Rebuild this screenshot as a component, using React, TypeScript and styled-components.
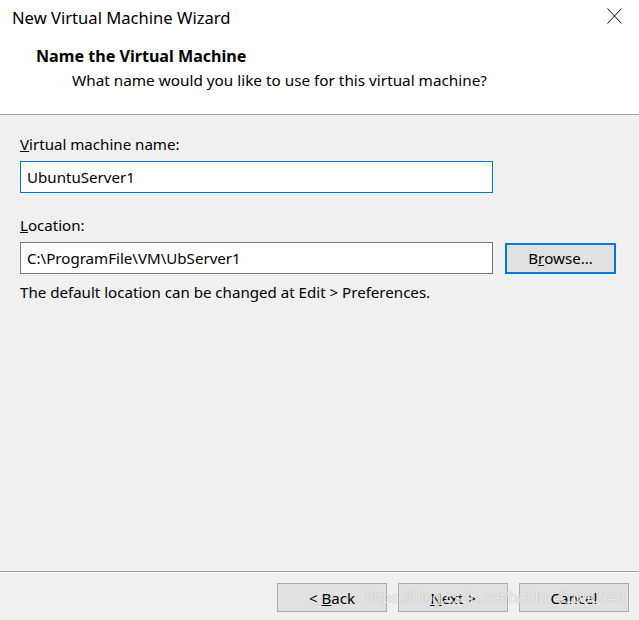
import React from "react";
import styled, {createGlobalStyle} from "styled-components";

const GlobalStyle = createGlobalStyle`
  html, body {
    margin: 0;
    padding: 0;
    background: #f0f0f0;
  }
  body {
    font-family: "Segoe UI", "Noto Sans", "Open Sans", sans-serif;
    color: #000;
  }
`

const Window = styled.div`
  position: relative;
  width: 639px;
  height: 620px;
  display: flex;
  flex-direction: column;
  background: #f0f0f0;
  overflow: hidden;
`

const Header = styled.div`
  height: 114px;
  background: #fff;
  border-bottom: 1px solid #a0a0a0;
  display: flex;
  flex-direction: column;
`

const TitleBar = styled.div`
  height: 34px;
  display: flex;
  align-items: center;
  justify-content: space-between;
  padding: 0 17px 0 12px;
  font-size: 16.6px;
`

const CloseIcon = styled.svg`
  width: 15px;
  height: 16px;
  margin-top: -3px;
`

const Heading = styled.div`
  margin-top: 12px;
  padding-left: 36px;
  font-size: 16.1px;
  font-weight: bold;
  line-height: 20px;
`

const SubHeading = styled.div`
  margin-top: 4px;
  padding-left: 72px;
  font-size: 15.3px;
  line-height: 20px;
`

const Body = styled.div`
  flex: 1;
  padding: 19px 23px 0 20px;
  display: flex;
  flex-direction: column;
  font-size: 15.1px;
`

const Label = styled.div<{ $top?: number }>`
  line-height: 20px;
  margin-top: ${p => p.$top ?? 0}px;
`

const Row = styled.div`
  display: flex;
  align-items: center;
  gap: 12px;
  margin-top: 7px;
`

const TextBox = styled.div<{ $focused?: boolean }>`
  width: 473px;
  height: 32px;
  box-sizing: border-box;
  background: #fff;
  border: 1px solid ${p => (p.$focused ? "#0078d7" : "#7a7a7a")};
  padding: 0 6px;
  display: flex;
  align-items: center;
  margin-top: ${p => (p.$focused ? 7 : 0)}px;
`

const Help = styled.div`
  margin-top: 8px;
  line-height: 20px;
`

const Footer = styled.div`
  box-sizing: border-box;
  height: 49px;
  border-top: 1px solid #a0a0a0;
  box-shadow: inset 0 1px 0 #fff;
  display: flex;
  justify-content: flex-end;
  align-items: flex-start;
  gap: 11px;
  padding: 11px 10px 0 0;
  font-size: 15.1px;
`

const Button = styled.div<{ $default?: boolean }>`
  width: ${p => (p.$default ? 111 : 110)}px;
  height: ${p => (p.$default ? 31 : 29)}px;
  box-sizing: border-box;
  background: #e1e1e1;
  border: ${p => (p.$default ? "2px solid #0078d7" : "1px solid #adadad")};
  display: flex;
  align-items: center;
  justify-content: center;
  flex-shrink: 0;
  white-space: pre;
`

const Watermark = styled.div`
  position: absolute;
  left: 365px;
  top: 589px;
  font-family: "Liberation Sans", Arial, sans-serif;
  font-size: 15.6px;
  color: rgba(250, 250, 250, 0.85);
  text-shadow: 0 0 1px rgba(110, 110, 110, 0.6);
  pointer-events: none;
  white-space: nowrap;
`

export default function App() {
    return (
        <Window>
            <GlobalStyle/>
            <Header>
                <TitleBar>
                    <span>New Virtual Machine Wizard</span>
                    <CloseIcon viewBox="0 0 15 16">
                        <path d="M0.5 0.5 L14.5 15.5 M14.5 0.5 L0.5 15.5" stroke="#000" strokeWidth="1" fill="none"/>
                    </CloseIcon>
                </TitleBar>
                <Heading>Name the Virtual Machine</Heading>
                <SubHeading>What name would you like to use for this virtual machine?</SubHeading>
            </Header>
            <Body>
                <Label><u>V</u>irtual machine name:</Label>
                <TextBox $focused>UbuntuServer1</TextBox>
                <Label $top={22}><u>L</u>ocation:</Label>
                <Row>
                    <TextBox>C:\ProgramFile\VM\UbServer1</TextBox>
                    <Button $default>B<u>r</u>owse...</Button>
                </Row>
                <Help>The default location can be changed at Edit &gt; Preferences.</Help>
            </Body>
            <Footer>
                <Button>{"< "}<u>B</u>ack</Button>
                <Button><u>N</u>ext{" >"}</Button>
                <Button>Cancel</Button>
            </Footer>
            <Watermark>https://blog.csdn.net/baidu_41090343</Watermark>
        </Window>
    )
}
